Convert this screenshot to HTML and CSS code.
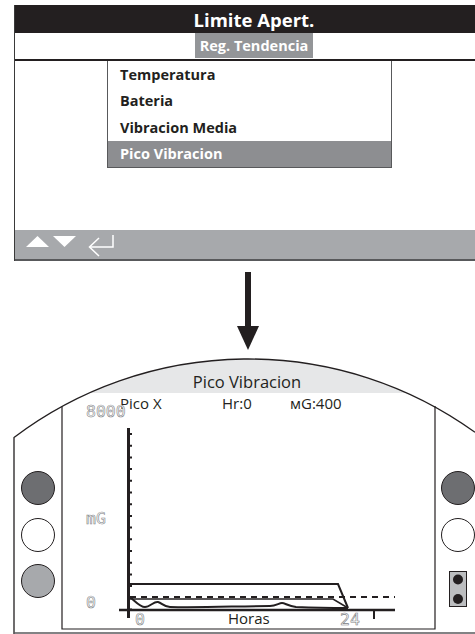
FILE: index.html
```html
<!DOCTYPE html>
<html>
<head>
<meta charset="utf-8">
<link rel="stylesheet" href="styles.css">
</head>
<body>
<div class="panel">
  <div class="hdr">Limite Apert.</div>
  <div class="sub"><span class="sub-tag">Reg. Tendencia</span></div>
  <div class="content">
    <ul class="menu">
      <li>Temperatura</li>
      <li>Bateria</li>
      <li>Vibracion Media</li>
      <li class="sel">Pico Vibracion</li>
    </ul>
  </div>
  <div class="bar">
    <svg class="bar-icons" width="110" height="29" viewBox="0 0 110 29">
      <polygon points="11,17 22.5,6 34,17" fill="#fff"/>
      <polygon points="38,6 61,6 49.5,17" fill="#fff"/>
      <path d="M98,5 V17 H75" fill="none" stroke="#fff" stroke-width="1.5"/>
      <path d="M84,8 L74.5,17 L84,26" fill="none" stroke="#fff" stroke-width="1.5"/>
    </svg>
  </div>
</div>
<svg class="device" width="475" height="373" viewBox="0 261 475 373">
  <rect x="245" y="272" width="6" height="56" fill="#231f20"/>
  <polygon points="237,326 259,326 248,350" fill="#231f20"/>

  <path d="M89,393 A388,388 0 0 1 407,393 Z" fill="#e6e7e8"/>
  <path d="M14,634 V437.5 A388,388 0 0 1 475,432.3" fill="none" stroke="#231f20" stroke-width="1.3"/>
  <line x1="14" y1="633" x2="475" y2="633" stroke="#58595b" stroke-width="1.3"/>
  <path d="M62,406.5 V629 H435 V406" fill="none" stroke="#231f20" stroke-width="1.2"/>

  <text class="title" x="247" y="387.5" text-anchor="middle">Pico Vibracion</text>
  <text class="row" x="120" y="409">Pico X</text>
  <text class="row" x="222" y="409">Hr:0</text>
  <text class="row" x="290" y="409">мG:400</text>

  <text class="lcd" x="86" y="417">8000</text>
  <text class="lcd" x="86" y="524">mG</text>
  <text class="lcd" x="86" y="608">0</text>
  <text class="lcd" x="135" y="625">0</text>
  <text class="lcd" x="340" y="625">24</text>
  <text class="row" x="228" y="624">Horas</text>

  <line x1="128.5" y1="428" x2="128.5" y2="618" stroke="#231f20" stroke-width="3"/>
  <line x1="131" y1="433" x2="131" y2="610" stroke="#231f20" stroke-width="2" stroke-dasharray="2 9.7"/>
  <line x1="119" y1="610" x2="395" y2="610" stroke="#231f20" stroke-width="2.5"/>
  <line x1="374" y1="610" x2="374" y2="619" stroke="#231f20" stroke-width="2"/>

  <path d="M130,584 H338 L348,608" fill="none" stroke="#231f20" stroke-width="2"/>
  <line x1="130" y1="597" x2="395" y2="597" stroke="#231f20" stroke-width="2" stroke-dasharray="6 5"/>
  <path d="M130,599 H333 L348,608" fill="none" stroke="#231f20" stroke-width="1.6"/>
  <path d="M130,597 C136,602 140,607 145,607 C150,607 154,601 158,602 C162,603 164,607 170,607 C200,608 240,606 270,606 C276,606 279,603 282,603 C285,603 288,606 296,607 C320,608 340,608 348,608" fill="none" stroke="#231f20" stroke-width="2"/>

  <circle cx="38" cy="488" r="16.5" fill="#6d6e71" stroke="#231f20" stroke-width="1"/>
  <circle cx="38" cy="535" r="16.5" fill="#fff" stroke="#231f20" stroke-width="1"/>
  <circle cx="38" cy="581" r="16.5" fill="#a7a9ac" stroke="#231f20" stroke-width="1"/>
  <circle cx="458" cy="488" r="16.5" fill="#6d6e71" stroke="#231f20" stroke-width="1"/>
  <circle cx="458" cy="535" r="16.5" fill="#fff" stroke="#231f20" stroke-width="1"/>
  <rect x="449.5" y="571.5" width="17" height="35" fill="#bcbec0" stroke="#231f20" stroke-width="1"/>
  <circle cx="458" cy="579.5" r="5" fill="#231f20"/>
  <circle cx="458" cy="599" r="5" fill="#231f20"/>
</svg>
</body>
</html>
```

FILE: styles.css
```css
html, body {
  margin: 0;
  padding: 0;
  background: #fff;
}
body {
  width: 475px;
  height: 634px;
  overflow: hidden;
}
.panel {
  margin: 5px 0 0 14px;
  width: 478px;
  height: 256px;
  border-left: 1px solid #3a3a3a;
  display: flex;
  flex-direction: column;
  font-family: "Open Sans", "Noto Sans", sans-serif;
}
.hdr {
  height: 28px;
  flex: none;
  background: #231f20;
  color: #fff;
  font-weight: 700;
  font-size: 18.5px;
  display: flex;
  align-items: center;
  justify-content: center;
}
.sub {
  height: 26px;
  flex: none;
  display: flex;
  justify-content: center;
  align-items: flex-start;
}
.sub-tag {
  background: #939598;
  color: #fff;
  font-weight: 700;
  font-size: 14.5px;
  height: 25px;
  line-height: 25px;
  padding: 0 5px;
}
.content {
  flex: 1;
  border-top: 2px solid #231f20;
  padding-left: 92px;
}
.menu {
  margin: 0;
  padding: 0;
  list-style: none;
  width: 283px;
  border: 1px solid #58595b;
  border-top: none;
}
.menu li {
  height: 26.5px;
  padding-left: 12px;
  display: flex;
  align-items: center;
  font-weight: 700;
  font-size: 14.5px;
  color: #231f20;
}
.menu li.sel {
  background: #8d8e91;
  color: #fff;
}
.bar {
  height: 29px;
  flex: none;
  background: #a7a9ac;
  border-bottom: 2px solid #58595b;
}
.bar-icons {
  display: block;
}
.device {
  display: block;
}
.title {
  font-family: "Open Sans", "Noto Sans", sans-serif;
  font-size: 16.5px;
  fill: #231f20;
}
.row {
  font-family: "Open Sans", "Noto Sans", sans-serif;
  font-size: 15px;
  fill: #231f20;
}
.lcd {
  font-family: "DejaVu Sans Mono", monospace;
  font-size: 16.5px;
  fill: #fff;
  stroke: #808285;
  stroke-width: 0.6;
}
```
